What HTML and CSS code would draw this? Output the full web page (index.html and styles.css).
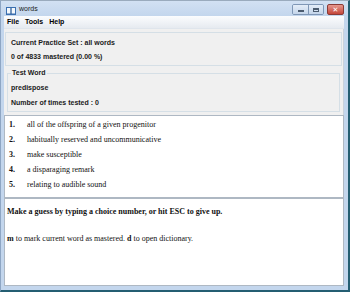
FILE: index.html
```html
<!DOCTYPE html>
<html lang="en">
<head>
    <meta charset="UTF-8">
    <title>words</title>
    <link rel="stylesheet" href="styles.css">
</head>
<body>
    <div class="window">
        <div class="titlebar">
            <svg class="app-icon" width="10" height="8" viewBox="0 0 10 8">
                <rect x="0" y="0" width="10" height="8" fill="#3a6fb0"/>
                <rect x="1" y="1" width="3.6" height="5.5" fill="#f4f8fc"/>
                <rect x="5.4" y="1" width="3.6" height="5.5" fill="#f4f8fc"/>
                <line x1="5" y1="1" x2="5" y2="7" stroke="#23538e" stroke-width="0.8"/>
            </svg>
            <span class="title">words</span>
            <div class="controls">
                <div class="btn-group">
                    <span class="btn min"><i></i></span>
                    <span class="btn max"><i></i></span>
                </div>
                <span class="btn close">&#x2715;</span>
            </div>
        </div>

        <div class="client">
            <div class="menubar">
                <span>File</span>
                <span>Tools</span>
                <span>Help</span>
            </div>

            <div class="info">
                <div class="group">
                    <div>Current Practice Set : all words</div>
                    <div>0 of 4833 mastered (0.00 %)</div>
                </div>
                <fieldset class="test-word">
                    <legend>Test Word</legend>
                    <div>predispose</div>
                    <div>Number of times tested : 0</div>
                </fieldset>
            </div>

            <ol class="choices">
                <li><b>1.</b><span>all of the offspring of a given progenitor</span></li>
                <li><b>2.</b><span>habitually reserved and uncommunicative</span></li>
                <li><b>3.</b><span>make susceptible</span></li>
                <li><b>4.</b><span>a disparaging remark</span></li>
                <li><b>5.</b><span>relating to audible sound</span></li>
            </ol>

            <div class="prompt">
                <p class="hint"><b>Make a guess by typing a choice number, or hit ESC to give up.</b></p>
                <p><b>m</b> to mark current word as mastered. <b>d</b> to open dictionary.</p>
            </div>
        </div>
    </div>
</body>
</html>
```

FILE: styles.css
```css
body {
    margin: 0;
    padding: 0;
    background-color: #245e72;
}
.window {
    width: 350px;
    height: 292px;
    box-sizing: border-box;
    display: flex;
    flex-direction: column;
    background-color: #c3d6ed;
    border-top: 1px solid #9aabbd;
    border-left: 1px solid #8ea6c4;
    border-right: 2px solid #245e72;
    border-bottom: 2px solid #245e72;
}
.titlebar {
    height: 15px;
    display: flex;
    align-items: flex-start;
    padding: 0 4px 0 5px;
    background: linear-gradient(#d2e1f3, #c3d6ed);
    font-family: "Liberation Sans", Arial, sans-serif;
}
.app-icon {
    margin-top: 6px;
}
.title {
    margin-left: 3px;
    margin-top: 3px;
    font-size: 7px;
    line-height: 10px;
    color: #1a1a1a;
}
.controls {
    margin-left: auto;
    margin-top: 3px;
    display: flex;
    gap: 3px;
}
.btn-group {
    display: flex;
    border: 1px solid #7f97b6;
    border-radius: 2px;
    overflow: hidden;
}
.btn {
    width: 15px;
    height: 9px;
    display: flex;
    align-items: center;
    justify-content: center;
    box-sizing: border-box;
    background: linear-gradient(#e4edf8, #c4d5ea);
}
.btn.max {
    border-left: 1px solid #7f97b6;
}
.btn.min i {
    width: 6px;
    height: 2px;
    margin-top: 3px;
    background: #4c5c70;
}
.btn.max i {
    width: 6px;
    height: 4px;
    border: 1px solid #4c5c70;
    border-top-width: 2px;
    box-sizing: border-box;
}
.btn.close {
    width: 17px;
    height: 11px;
    border: 1px solid #8a3a36;
    border-radius: 2px;
    background: linear-gradient(#e6978e, #c4463a);
    color: white;
    font-size: 7px;
    font-weight: bold;
    font-family: "DejaVu Sans", sans-serif;
}
.client {
    flex: 1;
    margin: 0 4px 4px 3px;
    display: flex;
    flex-direction: column;
    background-color: #f0f0f0;
    min-height: 0;
}
.menubar {
    height: 13px;
    box-sizing: border-box;
    display: flex;
    gap: 6px;
    padding: 1px 0 0 3px;
    background: linear-gradient(#fbfcfe, #e6eaf0);
    border-bottom: 1px solid #dfe5ec;
    font-family: "Liberation Sans", Arial, sans-serif;
    font-size: 7px;
    font-weight: bold;
    line-height: 10px;
}
.info {
    height: 86px;
    box-sizing: border-box;
    padding-top: 3px;
    border-right: 1px solid #c9d2dc;
    font-family: "Liberation Sans", Arial, sans-serif;
    font-size: 7px;
    font-weight: bold;
    color: #1a1a1a;
}
.group {
    margin: 0 1px;
    padding: 3px 5px 1px;
    line-height: 14px;
    border: 1px solid #d5dfe6;
}
.test-word {
    margin: 2px 3px 3px;
    padding: 2px 3px 1px;
    border: 1px solid #d5dfe6;
    line-height: 15px;
}
.test-word legend {
    padding: 0 1px;
    line-height: 10px;
}
.choices {
    height: 83px;
    box-sizing: border-box;
    margin: 0;
    padding: 1px 0 0 4px;
    list-style: none;
    background-color: white;
    border: 1px solid #aeb8c3;
    font-family: "Liberation Serif", "Times New Roman", serif;
    font-size: 8px;
    line-height: 15px;
    color: #111;
}
.choices li {
    display: grid;
    grid-template-columns: 18px auto;
}
.prompt {
    flex: 1;
    padding: 7px 0 0 2px;
    background-color: white;
    border: 1px solid #aeb8c3;
    font-family: "Liberation Serif", "Times New Roman", serif;
    font-size: 8px;
    line-height: 12px;
    color: #111;
}
.prompt p {
    margin: 0;
}
.prompt .hint {
    margin-bottom: 15px;
}
```
